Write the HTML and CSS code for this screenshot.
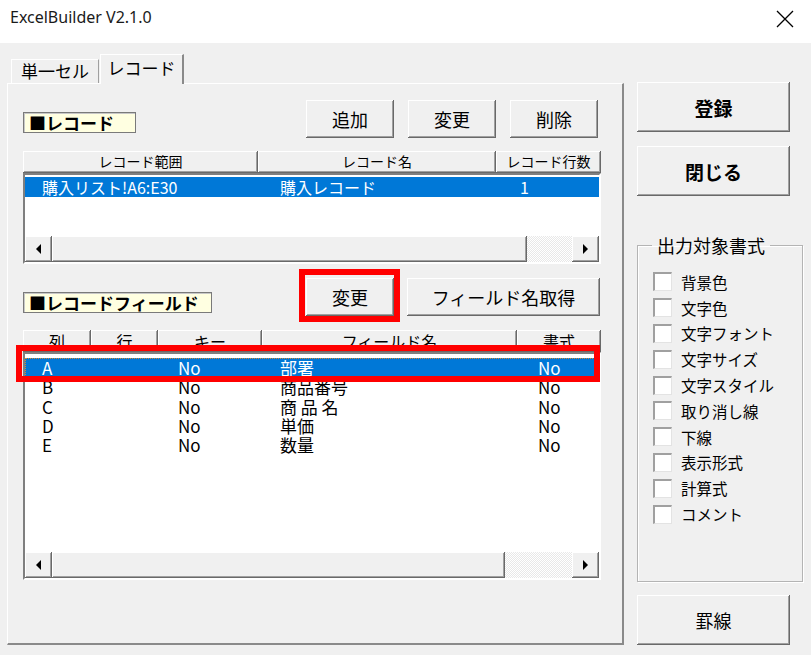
FILE: index.html
```html
<!DOCTYPE html>
<html lang="ja">
  <head>
    <meta charset="UTF-8" />
    <meta name="viewport" content="width=device-width, initial-scale=1.0" />
    <title>ExcelBuilder V2.1.0</title>
    <link rel="stylesheet" href="styles.css">
  </head>
  <body>
    <div class="titlebar">
      <span class="title">ExcelBuilder V2.1.0</span>
      <svg class="close" width="18" height="18" viewBox="0 0 18 18">
        <path d="M1 1 L17 17 M17 1 L1 17" stroke="#000" stroke-width="1.3" fill="none" />
      </svg>
    </div>

    <div class="client">
      <div class="tabs">
        <div class="tabstrip">
          <div class="tab">単一セル</div>
          <div class="tab selected">レコード</div>
        </div>

        <div class="panel">
          <!-- レコード -->
          <div class="sec-head first">
            <div class="caption cap-rec">■レコード</div>
            <div class="btns">
              <button class="btn w88">追加</button>
              <button class="btn w88">変更</button>
              <button class="btn w88">削除</button>
            </div>
          </div>

          <div class="lv lv-rec">
            <div class="lv-header">
              <div class="hcell" style="width:235px">レコード範囲</div>
              <div class="hcell" style="width:238px">レコード名</div>
              <div class="hcell" style="width:105px">レコード行数</div>
            </div>
            <div class="lv-box">
              <div class="lv-rows rec-rows">
                <div class="row sel">
                  <span class="c" style="width:233px;padding-left:17px">購入リスト!A6:E30</span>
                  <span class="c" style="width:238px;padding-left:22px">購入レコード</span>
                  <span class="c" style="padding-left:24px">1</span>
                </div>
              </div>
              <div class="hscroll">
                <div class="sb-btn"><i class="arr-l"></i></div>
                <div class="sb-thumb" style="width:475px"></div>
                <div class="sb-track"></div>
                <div class="sb-btn"><i class="arr-r"></i></div>
              </div>
            </div>
          </div>

          <!-- レコードフィールド -->
          <div class="sec-head second">
            <div class="caption cap-field">■レコードフィールド</div>
            <div class="btns">
              <button class="btn w88 marked">変更</button>
              <button class="btn w193">フィールド名取得</button>
            </div>
          </div>

          <div class="lv lv-field">
            <div class="lv-header">
              <div class="hcell" style="width:68px">列</div>
              <div class="hcell" style="width:67px">行</div>
              <div class="hcell" style="width:104px">キー</div>
              <div class="hcell" style="width:255px">フィールド名</div>
              <div class="hcell" style="width:84px">書式</div>
            </div>
            <div class="lv-box">
              <div class="lv-rows field-rows">
                <div class="row sel focus marked-row">
                  <span class="c c1">A</span><span class="c c2"></span><span class="c c3">No</span><span class="c c4">部署</span><span class="c c5">No</span>
                </div>
                <div class="row">
                  <span class="c c1">B</span><span class="c c2"></span><span class="c c3">No</span><span class="c c4">商品番号</span><span class="c c5">No</span>
                </div>
                <div class="row">
                  <span class="c c1">C</span><span class="c c2"></span><span class="c c3">No</span><span class="c c4">商 品 名</span><span class="c c5">No</span>
                </div>
                <div class="row">
                  <span class="c c1">D</span><span class="c c2"></span><span class="c c3">No</span><span class="c c4">単価</span><span class="c c5">No</span>
                </div>
                <div class="row">
                  <span class="c c1">E</span><span class="c c2"></span><span class="c c3">No</span><span class="c c4">数量</span><span class="c c5">No</span>
                </div>
              </div>
              <div class="hscroll">
                <div class="sb-btn"><i class="arr-l"></i></div>
                <div class="sb-thumb" style="width:453px"></div>
                <div class="sb-track"></div>
                <div class="sb-btn"><i class="arr-r"></i></div>
              </div>
            </div>
          </div>
        </div>
      </div>

      <div class="side">
        <button class="btn side-btn bold first-btn">登録</button>
        <button class="btn side-btn bold">閉じる</button>

        <fieldset class="group">
          <legend>出力対象書式</legend>
          <div class="checks">
            <label class="chk"><span class="box"></span>背景色</label>
            <label class="chk"><span class="box"></span>文字色</label>
            <label class="chk"><span class="box"></span>文字フォント</label>
            <label class="chk"><span class="box"></span>文字サイズ</label>
            <label class="chk"><span class="box"></span>文字スタイル</label>
            <label class="chk"><span class="box"></span>取り消し線</label>
            <label class="chk"><span class="box"></span>下線</label>
            <label class="chk"><span class="box"></span>表示形式</label>
            <label class="chk"><span class="box"></span>計算式</label>
            <label class="chk"><span class="box"></span>コメント</label>
          </div>
        </fieldset>

        <button class="btn side-btn last-btn">罫線</button>
      </div>
    </div>
  </body>
</html>
```

FILE: styles.css
```css
* {
  margin: 0;
  padding: 0;
  box-sizing: border-box;
}
body {
  width: 811px;
  height: 655px;
  overflow: hidden;
  background: #f0f0f0;
  font-family: "Noto Sans CJK JP", "Noto Sans", sans-serif;
  color: #000;
}

/* タイトルバー */
.titlebar {
  height: 43px;
  background: #fff;
  display: flex;
  justify-content: space-between;
  align-items: flex-start;
  padding: 5px 17px 0 10px;
}
.title {
  font-family: "Noto Sans", sans-serif;
  font-size: 16px;
  line-height: 25px;
  color: #1a1a1a;
}
.close {
  margin-top: 5px;
}

.client {
  display: flex;
  padding-left: 7px;
}

/* タブ */
.tabs {
  width: 617px;
}
.tabstrip {
  height: 40px;
  display: flex;
  align-items: flex-end;
  padding-left: 4px;
}
.tab {
  width: 88px;
  height: 24px;
  border-top: 1px solid #fff;
  border-left: 1px solid #fff;
  border-right: 1px solid #a0a0a0;
  font-size: 17px;
  line-height: 22px;
  text-align: center;
}
.tab.selected {
  width: 84px;
  height: 30px;
  margin-left: 1px;
  margin-bottom: -1px;
  border-right: 2px solid #8a8a8a;
  line-height: 26px;
  position: relative;
  z-index: 1;
  background: #f0f0f0;
}
.panel {
  height: 562px;
  border-top: 1px solid #fff;
  border-left: 1px solid #fff;
  border-right: 2px solid #8a8a8a;
  border-bottom: 2px solid #8a8a8a;
  padding: 16px 21px 0 15px;
}

/* ボタン */
.btn {
  background: #f0f0f0;
  border: none;
  box-shadow: inset -1px -1px #696969, inset 1px 1px #fff, inset -2px -2px #a0a0a0, inset 2px 2px #f0f0f0;
  font-family: "Noto Sans CJK JP", sans-serif;
  font-size: 18px;
  color: #000;
  height: 38px;
}
.w88 {
  width: 88px;
}
.w193 {
  width: 193px;
}
.bold {
  font-weight: bold;
  font-size: 19px;
}

.sec-head {
  display: flex;
  justify-content: space-between;
  align-items: flex-end;
  height: 38px;
}
.sec-head .btns {
  display: flex;
  gap: 14px;
  margin-right: 3px;
}
.sec-head.second {
  margin-top: 14px;
}
.sec-head.second .btns {
  gap: 13px;
  margin-right: 1px;
}
.caption {
  height: 21px;
  background: #ffffe1;
  border: 1px solid #7a7a7a;
  box-shadow: inset 1px 1px #c8c8c8;
  font-weight: bold;
  font-size: 17px;
  line-height: 19px;
  padding-left: 5px;
  white-space: nowrap;
}
.cap-rec {
  width: 113px;
  margin-bottom: 5px;
}
.cap-field {
  width: 189px;
  margin-bottom: 3px;
}

/* 注目枠 */
.marked {
  position: relative;
}
.marked::after {
  content: "";
  position: absolute;
  top: -9px;
  left: -7px;
  right: -6px;
  bottom: -6px;
  border: 6px solid #f00;
}
.marked-row {
  position: relative;
}
.marked-row::after {
  content: "";
  position: absolute;
  top: -13px;
  left: -9px;
  right: -1px;
  bottom: -5px;
  border: 6px solid #f00;
}

/* リストビュー */
.lv-rec {
  margin-top: 13px;
}
.lv-field {
  margin-top: 14px;
}
.lv-header {
  display: flex;
  height: 22px;
}
.hcell {
  flex: none;
  height: 22px;
  box-shadow: inset -1px -1px #696969, inset 1px 1px #fff, inset -2px -2px #a0a0a0;
  font-size: 14px;
  line-height: 21px;
  text-align: center;
  white-space: nowrap;
}
.lv-field .hcell {
  font-size: 16px;
  line-height: 22px;
}
.lv-box {
  width: 578px;
  border-top: 2px solid #7f7f7f;
  border-left: 2px solid #7f7f7f;
  border-right: 2px solid #fff;
  border-bottom: 2px solid #fff;
  background: #fff;
}
.lv-rows {
  padding-top: 2px;
}
.rec-rows {
  height: 61px;
  font-size: 16px;
}
.field-rows {
  height: 198px;
  padding-top: 4px;
  font-size: 17px;
}
.row {
  display: flex;
  height: 20px;
  line-height: 20px;
  white-space: nowrap;
}
.field-rows .row {
  height: 19.25px;
  line-height: 19px;
}
.row.sel {
  background: #0078d7;
  color: #fff;
}
.row.focus {
  outline: 1px dotted #d9892e;
  outline-offset: -1px;
}
.c {
  flex: none;
}
.c1 {
  width: 66px;
  padding-left: 17px;
}
.c2 {
  width: 67px;
}
.c3 {
  width: 104px;
  padding-left: 20px;
}
.c4 {
  width: 255px;
  padding-left: 18px;
}
.c5 {
  padding-left: 21px;
}

/* スクロールバー */
.hscroll {
  display: flex;
  height: 26px;
  background: #f0f0f0;
}
.sb-btn,
.sb-thumb {
  flex: none;
  box-shadow: inset -1px -1px #696969, inset 1px 1px #fff, inset -2px -2px #a0a0a0;
  background: #f0f0f0;
}
.sb-btn {
  width: 27px;
  display: flex;
  align-items: center;
  justify-content: center;
}
.sb-track {
  flex: 1;
  background: repeating-conic-gradient(#fff 0 25%, #e8e8e8 0 50%) 0 0 / 2px 2px;
}
.arr-l {
  border-top: 5px solid transparent;
  border-bottom: 5px solid transparent;
  border-right: 5px solid #000;
}
.arr-r {
  border-top: 5px solid transparent;
  border-bottom: 5px solid transparent;
  border-left: 5px solid #000;
}

/* 右側 */
.side {
  width: 166px;
  margin-left: 13px;
  display: flex;
  flex-direction: column;
  align-items: flex-start;
}
.side-btn {
  width: 153px;
  height: 50px;
}
.first-btn {
  margin-top: 39px;
  margin-bottom: 14px;
}
.group {
  width: 166px;
  height: 348px;
  margin-top: 38px;
  border: 1px solid #b4b4b4;
  box-shadow: 1px 1px #fff, inset 1px 1px #fff;
  padding: 0;
}
.group legend {
  margin-left: 14px;
  padding: 0 5px;
  font-size: 18px;
  line-height: 22px;
}
.checks {
  padding: 13px 0 0 15px;
}
.chk {
  display: flex;
  align-items: center;
  gap: 9px;
  height: 25.8px;
  font-size: 15.5px;
}
.box {
  width: 19px;
  height: 19px;
  background: #fff;
  border-top: 2px solid #a0a0a0;
  border-left: 2px solid #a0a0a0;
  border-right: 1px solid #e3e3e3;
  border-bottom: 1px solid #e3e3e3;
}
.last-btn {
  margin-top: 13px;
}
```
